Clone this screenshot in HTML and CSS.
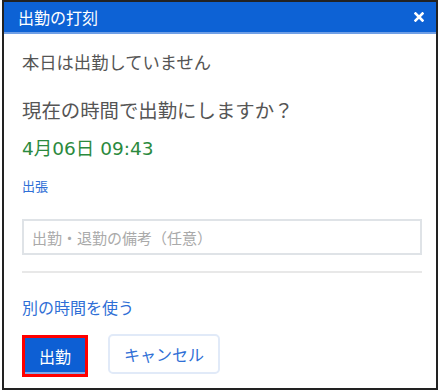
FILE: index.html
```html
<!DOCTYPE html>
<html>
<head>
	<title>出勤の打刻</title>
<link rel="stylesheet" href="styles.css">
</head>
<body>

<div class="dialog">
	<div class="dialog-head">
		<span class="dialog-title">出勤の打刻</span>
		<span class="close">
			<svg width="10" height="10" viewBox="0 0 10 10"><path d="M1.5 1.5L8.5 8.5M8.5 1.5L1.5 8.5" stroke="#fff" stroke-width="2.6" stroke-linecap="square"/></svg>
		</span>
	</div>
	<div class="dialog-body">
		<p class="status">本日は出勤していません</p>
		<p class="question">現在の時間で出勤にしますか？</p>
		<p class="now">4月06日 09:43</p>
		<a class="small-link" href="#">出張</a>
		<input type="text" class="memo" placeholder="出勤・退勤の備考（任意）">
		<hr class="sep">
		<a class="other-time" href="#">別の時間を使う</a>
		<div class="actions">
			<button type="button" class="btn-primary">出勤</button>
			<button type="button" class="btn-cancel">キャンセル</button>
		</div>
	</div>
</div>

</body>
</html>
```
FILE: styles.css
```css
*{box-sizing: border-box;font-family: "Noto Sans CJK JP", "Noto Sans", sans-serif;}

body{margin: 0;background: #fff;}

.dialog{width: 436px;height: 390px;margin: 0 2px;border: 2px solid #222;background: #fff;}

.dialog-head{height: 32px;background: #0d62d5;border-bottom: 2px solid #6f9fe6;display: flex;align-items: center;justify-content: space-between;padding: 0 10px 0 14px;}
.dialog-title{color: #fff;font-size: 16px;line-height: 20px;}
.close{display: flex;align-items: center;padding-right: 2px;}

.dialog-body{padding: 16px 14px 0 18px;}

p{margin: 0;}
.status{font-size: 17.3px;line-height: 24px;color: #555;}
.question{font-size: 19.4px;line-height: 28px;color: #555;margin-top: 22px;}
.now{font-family: "DejaVu Sans", "Noto Sans CJK JP", sans-serif;font-size: 18.5px;line-height: 26px;color: #2b8a3e;margin-top: 12px;}

a{color: #2f6fd6;text-decoration: none;display: block;}
.small-link{font-size: 13px;line-height: 20px;margin-top: 14px;}

.memo{display: block;width: 400px;height: 36px;margin-top: 23px;border: 2px solid #dfe3e7;padding: 0 8px;font-size: 15px;outline: none;}
.memo::placeholder{color: #aaa;}

.sep{width: 400px;margin: 16px 0 0 0;border: 0;border-top: 2px solid #e8e8e8;}

.other-time{font-size: 16px;line-height: 22px;margin-top: 23px;}

.actions{display: flex;align-items: flex-start;gap: 20px;margin-top: 16px;}
.btn-primary{width: 66px;height: 42px;margin-top: 1px;border: 3px solid #f00;background: #0d5fd4;box-shadow: inset 0 -2px 0 #7ea8ea;color: #fff;font-size: 16px;padding: 0;}
.btn-cancel{width: 112px;height: 40px;border: 2px solid #e1eaf8;border-radius: 5px;background: #fff;color: #2f6fd6;font-size: 16px;padding: 0;}
```
